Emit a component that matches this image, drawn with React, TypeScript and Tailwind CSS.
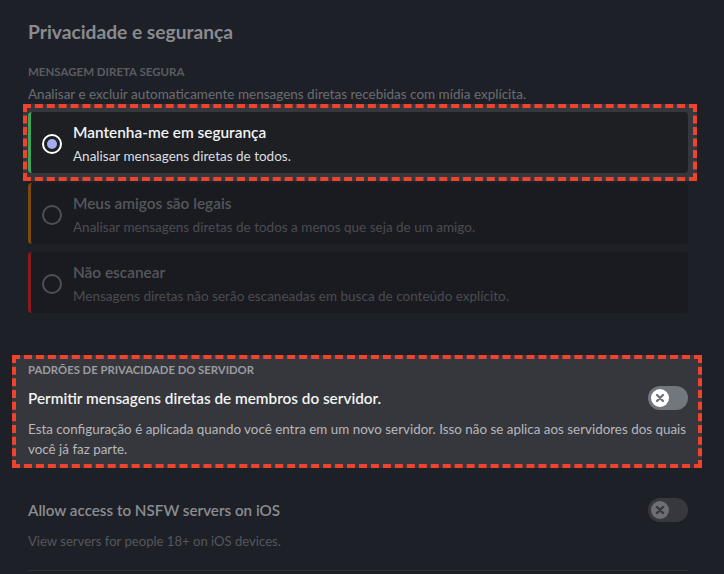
import React from "react";

const font = { fontFamily: 'Lato, "Noto Sans", "Liberation Sans", sans-serif' };

function XKnob({ knob, x }: { knob: string; x: string }) {
  return (
    <div className={`w-[40px] h-[24px] rounded-full flex items-center pl-[3px] shrink-0 ${knob === "on" ? "bg-[#72767d]" : "bg-[#36383e]"}`}>
      <div className={`w-[18px] h-[18px] rounded-full flex items-center justify-center ${x === "bright" ? "bg-white" : "bg-[#6c6e74]"}`}>
        <svg width="10" height="10" viewBox="0 0 10 10">
          <path d="M2 2 L8 8 M8 2 L2 8" stroke={x === "bright" ? "#72767d" : "#36383e"} strokeWidth="2.4" strokeLinecap="round" />
        </svg>
      </div>
    </div>
  );
}

function Radio({ selected }: { selected: boolean }) {
  if (selected)
    return (
      <div className="w-[20px] h-[20px] rounded-full border-[2.5px] border-white flex items-center justify-center shrink-0">
        <div className="w-[10px] h-[10px] rounded-full bg-[#a3adf2]" />
      </div>
    );
  return <div className="w-[20px] h-[20px] rounded-full border-2 border-[#4e5056] shrink-0" />;
}

function Card({
  selected,
  bar,
  bg,
  title,
  sub,
}: {
  selected: boolean;
  bar: string;
  bg: string;
  title: string;
  sub: string;
}) {
  return (
    <div className={`h-[61px] flex items-start border-l-[3px] rounded-[4px] pl-[11px] pt-[10px] ${bar} ${bg}`}>
      <div className="h-[44px] flex items-center">
        <Radio selected={selected} />
      </div>
      <div className="ml-[11px] flex flex-col">
        <div className={`text-[15.4px] leading-[20px] font-semibold ${selected ? "text-[#f2f3f5]" : "text-[#55575d]"}`}>{title}</div>
        <div className={`mt-[4px] text-[13.5px] leading-[20px] ${selected ? "text-[#dbdee1]" : "text-[#4a4c52]"}`}>{sub}</div>
      </div>
    </div>
  );
}

export default function App() {
  return (
    <div className="w-[724px] h-[574px] overflow-hidden bg-[#1e2027] pl-[28px] pr-[36px] pt-[20px]" style={font}>
      <h1 className="text-[19.2px] leading-[24px] font-bold text-[#898b90]">Privacidade e segurança</h1>
      <h2 className="mt-[20px] text-[11.5px] leading-[16px] font-bold uppercase text-[#5a5c62]">Mensagem direta segura</h2>
      <p className="mt-[4px] text-[13.5px] leading-[20px] text-[#6b6d72]">
        Analisar e excluir automaticamente mensagens diretas recebidas com mídia explícita.
      </p>

      <div className="ml-[-5px] mr-[-9px] border-4 border-dashed border-[#f0432e] bg-[#35373c] pt-[4px] pb-[4px] pl-[1px] pr-[5px]">
        <Card
          selected
          bar="border-[#3ba55c]"
          bg="bg-[#1e1f23]"
          title="Mantenha-me em segurança"
          sub="Analisar mensagens diretas de todos."
        />
      </div>
      <div className="mt-[2px]">
        <Card
          selected={false}
          bar="border-[#7b4a08]"
          bg="bg-[#1a1b20]"
          title="Meus amigos são legais"
          sub="Analisar mensagens diretas de todos a menos que seja de um amigo."
        />
      </div>
      <div className="mt-[8px]">
        <Card
          selected={false}
          bar="border-[#8a1a1c]"
          bg="bg-[#1a1b20]"
          title="Não escanear"
          sub="Mensagens diretas não serão escaneadas em busca de conteúdo explícito."
        />
      </div>

      <div className="mt-[42px] ml-[-16px] mr-[-14px] border-4 border-dashed border-[#f0432e] bg-[#35373c] pt-[3px] pb-[5px] pl-[12px] pr-[10px]">
        <h2 className="text-[11.3px] leading-[16px] font-bold uppercase text-[#9a9ca1]">Padrões de privacidade do servidor</h2>
        <div className="mt-[10px] flex items-center justify-between h-[20px]">
          <div className="text-[15.3px] leading-[20px] font-semibold text-[#f2f3f5]">
            Permitir mensagens diretas de membros do servidor.
          </div>
          <XKnob knob="on" x="bright" />
        </div>
        <p className="mt-[11px] text-[13.4px] leading-[20px] text-[#b5b8bd]">
          Esta configuração é aplicada quando você entra em um novo servidor. Isso não se aplica aos servidores dos quais você já faz parte.
        </p>
      </div>

      <div className="mt-[32px] flex items-center justify-between h-[20px]">
        <div className="text-[15.2px] leading-[20px] font-semibold text-[#8b8d92]">Allow access to NSFW servers on iOS</div>
        <XKnob knob="off" x="dim" />
      </div>
      <p className="mt-[12px] text-[13.1px] leading-[18px] text-[#55575c]">View servers for people 18+ on iOS devices.</p>
      <div className="mt-[20px] border-t border-[#2e3036]" />
    </div>
  );
}
